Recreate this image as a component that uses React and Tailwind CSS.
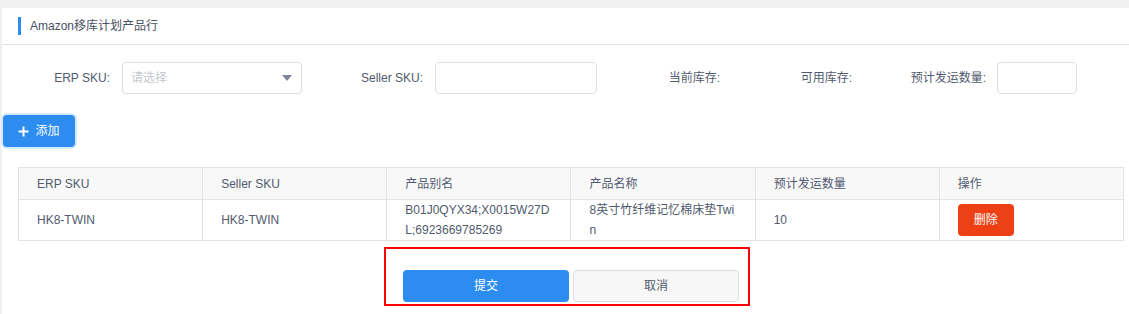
import React from "react";

const rows = [
  {
    erp: "HK8-TWIN",
    seller: "HK8-TWIN",
    alias: "B01J0QYX34;X0015W27DL;6923669785269",
    name: "8英寸竹纤维记忆棉床垫Twin",
    qty: "10",
  },
];

const columns = ["ERP SKU", "Seller SKU", "产品别名", "产品名称", "预计发运数量", "操作"];

export default function App() {
  return (
    <div
      className="min-h-screen bg-[#f0f0f0] pt-[8px] pl-[2px] text-[12px] text-[#515a6e]"
      style={{ fontFamily: '"Liberation Sans", "Noto Sans CJK SC", sans-serif' }}
    >
      <div className="bg-white min-h-[306px]">
        {/* Header */}
        <div className="h-[37px] flex items-center border-b border-[#e3e3e3] pl-[16px]">
          <span className="w-[3px] h-[18px] bg-[#2d8cf0] mr-[9px]"></span>
          <span className="text-[#495060]">Amazon移库计划产品行</span>
        </div>

        {/* Form row */}
        <div className="flex items-center mt-[17px] h-[32px]">
          <label className="w-[108px] text-right">ERP SKU:</label>
          <div className="ml-[12px] w-[180px] h-[32px] border border-[#dcdee2] rounded-[4px] flex items-center justify-between px-[8px]">
            <span className="text-[#c5c8ce]">请选择</span>
            <svg width="10" height="6" viewBox="0 0 10 6" className="mr-[1px]">
              <path d="M0 0 L10 0 L5 6 Z" fill="#808695" />
            </svg>
          </div>
          <label className="w-[121px] text-right">Seller SKU:</label>
          <input className="ml-[12px] w-[162px] h-[32px] border border-[#dcdee2] rounded-[4px] outline-none" />
          <label className="w-[123px] text-right">当前库存:</label>
          <label className="w-[132px] text-right">可用库存:</label>
          <label className="w-[134px] text-right">预计发运数量:</label>
          <input className="ml-[11px] w-[80px] h-[32px] border border-[#dcdee2] rounded-[4px] outline-none" />
        </div>

        {/* Add button */}
        <button className="mt-[21px] ml-[1px] w-[72px] h-[32px] rounded-[4px] bg-[#2d8cf0] text-white flex items-center justify-center gap-[6px] ring-2 ring-[#d5e8fc]">
          <svg width="11" height="11" viewBox="0 0 11 11">
            <path d="M5.5 0.5 V10.5 M0.5 5.5 H10.5" stroke="white" strokeWidth="2" />
          </svg>
          <span>添加</span>
        </button>

        {/* Table */}
        <div className="mt-[20px] ml-[16px] mr-[5px]">
          <table className="w-full table-fixed border-collapse border border-[#e3e3e3]">
            <thead>
              <tr className="bg-[#f8f8f9] h-[32px]">
                {columns.map((c) => (
                  <th key={c} className="text-left font-normal px-[18px] border border-[#e3e3e3]">
                    {c}
                  </th>
                ))}
              </tr>
            </thead>
            <tbody>
              {rows.map((r) => (
                <tr key={r.erp} className="h-[41px]">
                  <td className="px-[18px] border border-[#e3e3e3]">{r.erp}</td>
                  <td className="px-[18px] border border-[#e3e3e3]">{r.seller}</td>
                  <td className="px-[18px] border border-[#e3e3e3] break-all leading-[20px]">{r.alias}</td>
                  <td className="px-[18px] border border-[#e3e3e3] break-all leading-[20px]">{r.name}</td>
                  <td className="px-[18px] border border-[#e3e3e3]">{r.qty}</td>
                  <td className="px-[18px] border border-[#e3e3e3]">
                    <button className="w-[56px] h-[32px] rounded-[4px] bg-[#ed4014] text-white">删除</button>
                  </td>
                </tr>
              ))}
            </tbody>
          </table>
        </div>

        {/* Actions */}
        <div className="mt-[6px] ml-[382px] w-[366px] h-[59px] border-2 border-[#ff0000] flex items-end pl-[17px] pb-[2px] gap-[4px]">
          <button className="w-[166px] h-[32px] rounded-[4px] bg-[#2d8cf0] text-white">提交</button>
          <button className="w-[166px] h-[32px] rounded-[4px] bg-[#f7f7f7] border border-[#dcdee2] text-[#515a6e]">取消</button>
        </div>
      </div>
    </div>
  );
}
